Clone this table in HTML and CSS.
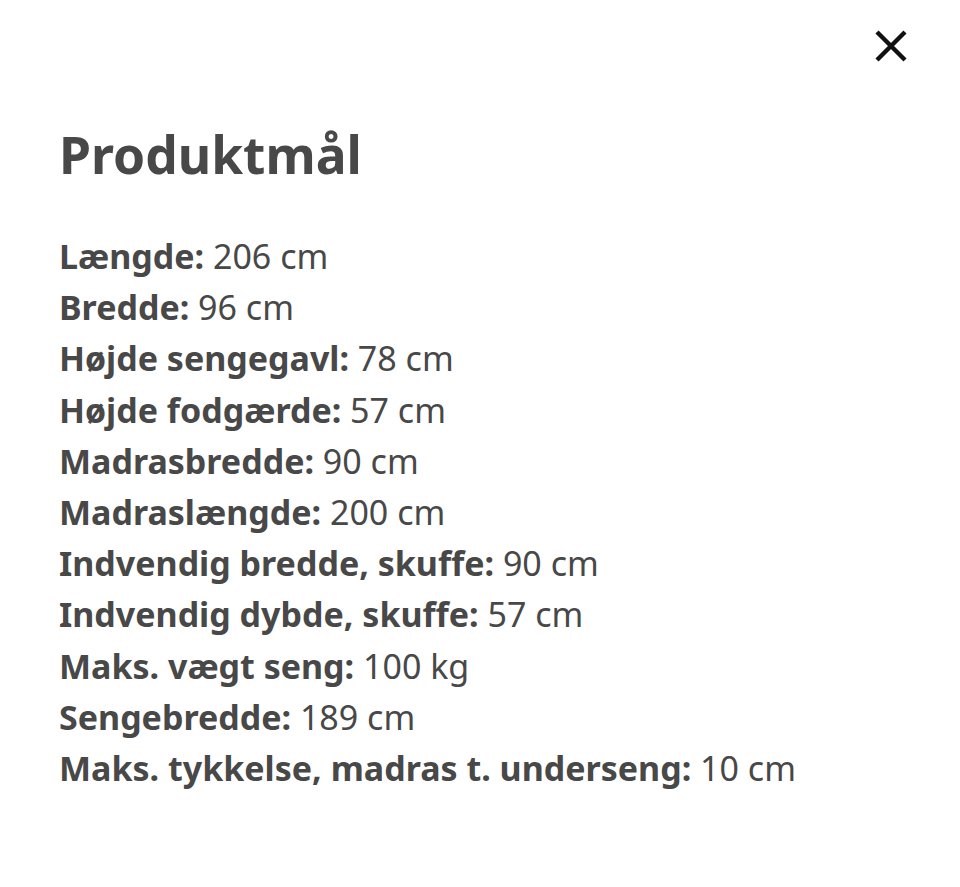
FILE: index.html
```html
<!DOCTYPE html>
<html lang="da">
<head>
<meta charset="utf-8">
<link rel="stylesheet" href="styles.css">
</head>
<body>
<div class="sheet">
  <div class="topbar">
    <button class="close" aria-label="Luk">
      <svg width="34" height="34" viewBox="0 0 34 34"><path d="M3 3 L31 31 M31 3 L3 31" stroke="#111" stroke-width="4.4" fill="none"/></svg>
    </button>
  </div>
  <h1 class="title">Produktmål</h1>
  <ul class="dims">
    <li><b>Længde:</b> 206 cm</li>
    <li><b>Bredde:</b> 96 cm</li>
    <li><b>Højde sengegavl:</b> 78 cm</li>
    <li><b>Højde fodgærde:</b> 57 cm</li>
    <li><b>Madrasbredde:</b> 90 cm</li>
    <li><b>Madraslængde:</b> 200 cm</li>
    <li><b>Indvendig bredde, skuffe:</b> 90 cm</li>
    <li><b>Indvendig dybde, skuffe:</b> 57 cm</li>
    <li><b>Maks. vægt seng:</b> 100 kg</li>
    <li><b>Sengebredde:</b> 189 cm</li>
    <li><b>Maks. tykkelse, madras t. underseng:</b> 10 cm</li>
  </ul>
</div>
</body>
</html>
```
FILE: styles.css
```css
html, body { margin: 0; padding: 0; background: #fff; }
body { font-family: "Noto Sans", "Open Sans", sans-serif; color: #484848; }
.sheet { padding: 0 60px 0 59px; }
.topbar { display: flex; justify-content: flex-end; padding-top: 29px; margin-right: -8px; }
.close { background: none; border: 0; padding: 0; width: 34px; height: 34px; cursor: pointer; }
.close svg { display: block; }
.title { font-size: 51.5px; font-weight: 700; margin: 58px 0 0; line-height: 67px; }
.dims { list-style: none; margin: 43px 0 0; padding: 0; font-size: 34px; line-height: 51.2px; }
.dims b { font-weight: 700; }
```
